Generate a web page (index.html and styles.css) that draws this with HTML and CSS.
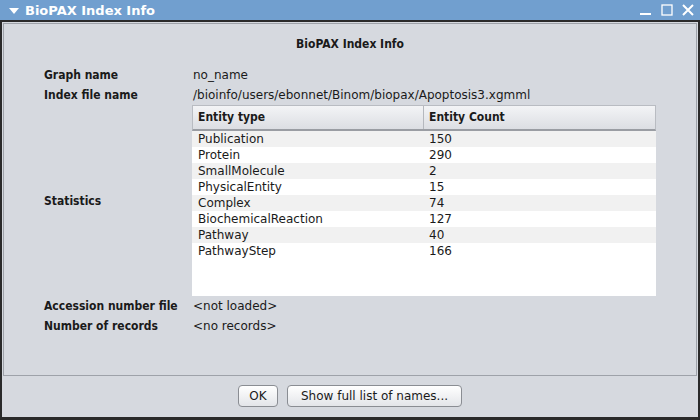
FILE: index.html
```html
<!DOCTYPE html>
<html>
<head>
<meta charset="utf-8">
<link rel="stylesheet" href="styles.css">
</head>
<body>
<div class="window">
  <div class="titlebar">
    <svg class="menu-arrow" width="10" height="6" viewBox="0 0 10 6"><polygon points="0,0 10,0 5,6" fill="#fff"/></svg>
    <span class="title">BioPAX Index Info</span>
    <div class="controls">
      <svg width="12" height="12" viewBox="0 0 12 12"><rect x="0" y="9" width="11" height="2" fill="#fff"/></svg>
      <svg width="12" height="12" viewBox="0 0 12 12"><rect x="1" y="1" width="10" height="10" fill="none" stroke="#fff" stroke-width="1.3"/></svg>
      <svg width="12" height="12" viewBox="0 0 12 12"><path d="M1 1 L11 11 M11 1 L1 11" stroke="#fff" stroke-width="2"/></svg>
    </div>
  </div>
  <div class="body">
    <div class="panel">
      <div class="heading">BioPAX Index Info</div>
      <div class="grid">
        <div class="label">Graph name</div>
        <div class="value">no_name</div>
        <div class="label">Index file name</div>
        <div class="value">/bioinfo/users/ebonnet/Binom/biopax/Apoptosis3.xgmml</div>
        <div class="label stat-label">Statistics</div>
        <div class="table">
          <div class="thead">
            <div class="th c1">Entity type</div>
            <div class="th c2">Entity Count</div>
          </div>
          <div class="tbody">
            <div class="tr odd"><div class="td c1">Publication</div><div class="td c2">150</div></div>
            <div class="tr"><div class="td c1">Protein</div><div class="td c2">290</div></div>
            <div class="tr odd"><div class="td c1">SmallMolecule</div><div class="td c2">2</div></div>
            <div class="tr"><div class="td c1">PhysicalEntity</div><div class="td c2">15</div></div>
            <div class="tr odd"><div class="td c1">Complex</div><div class="td c2">74</div></div>
            <div class="tr"><div class="td c1">BiochemicalReaction</div><div class="td c2">127</div></div>
            <div class="tr odd"><div class="td c1">Pathway</div><div class="td c2">40</div></div>
            <div class="tr"><div class="td c1">PathwayStep</div><div class="td c2">166</div></div>
          </div>
        </div>
        <div class="label">Accession number file</div>
        <div class="value">&lt;not loaded&gt;</div>
        <div class="label">Number of records</div>
        <div class="value">&lt;no records&gt;</div>
      </div>
    </div>
    <div class="buttons">
      <button class="btn ok">OK</button>
      <button class="btn full">Show full list of names...</button>
    </div>
  </div>
</div>
</body>
</html>
```

FILE: styles.css
```css
* { box-sizing: border-box; }
html, body { margin: 0; padding: 0; }
body {
  width: 700px;
  height: 420px;
  overflow: hidden;
  font-family: "DejaVu Sans", sans-serif;
  font-size: 12px;
  color: #1a1a1a;
}
.window {
  width: 700px;
  height: 420px;
  display: flex;
  flex-direction: column;
  background: #d6d9df;
  border-left: 2px solid #2a2a2a;
  border-right: 2px solid #2a2a2a;
  border-bottom: 2px solid #2a2a2a;
}
.titlebar {
  height: 22px;
  margin: 0 -2px;
  background: #719fcf;
  border-bottom: 2px solid #2a2a2a;
  display: flex;
  align-items: center;
  padding-left: 9px;
  color: #fff;
}
.menu-arrow { margin-top: 1px; }
.title {
  font-weight: bold;
  font-size: 13px;
  margin-left: 6px;
}
.controls {
  margin-left: auto;
  display: flex;
  gap: 9px;
  padding-right: 6px;
}
.body {
  flex: 1;
  display: flex;
  flex-direction: column;
  border-bottom: 1px solid #2a2a2a;
}
.panel {
  margin: 1px 1px 0 1px;
  height: 353px;
  border: 1px solid #9ea2a9;
  padding: 12px 0 0 40px;
}
.heading {
  text-align: center;
  font-family: "DejaVu Sans Condensed", "DejaVu Sans", sans-serif;
  font-weight: bold;
  line-height: 16px;
  margin-left: -40px;
  font-size: 12px;
}
.grid {
  margin-top: 13px;
  display: grid;
  grid-template-columns: 148px 464px;
  grid-template-rows: 20px 20px 191px 20px 20px;
}
.label {
  font-family: "DejaVu Sans Condensed", "DejaVu Sans", sans-serif;
  font-weight: bold;
  line-height: 20px;
  white-space: nowrap;
}
.value {
  line-height: 20px;
  padding-left: 1px;
  white-space: nowrap;
}
.stat-label {
  align-self: center;
}
.table {
  height: 191px;
  background: #fff;
  display: flex;
  flex-direction: column;
}
.thead {
  height: 26px;
  display: flex;
  background: linear-gradient(#f3f4f6, #dcdee3);
  border: 1px solid #b9bcc2;
  border-bottom: 2px solid #9a9da3;
}
.th {
  font-family: "DejaVu Sans Condensed", "DejaVu Sans", sans-serif;
  font-weight: bold;
  line-height: 23px;
  padding-left: 5px;
}
.th.c1 { border-right: 1px solid #b5b8be; }
.c1 { width: 231px; }
.c2 { flex: 1; }
.tbody { display: flex; flex-direction: column; }
.tr {
  height: 16px;
  display: flex;
  line-height: 16px;
}
.tr.odd { background: #f1f1f1; }
.td { padding-left: 6px; }
.buttons {
  flex: 1;
  display: flex;
  justify-content: center;
  align-items: flex-start;
  gap: 9px;
  padding-top: 9px;
}
.btn {
  height: 22px;
  font-family: "DejaVu Sans", sans-serif;
  font-size: 12px;
  color: #1a1a1a;
  background: linear-gradient(#ffffff, #e3e5e9);
  border: 1px solid #8a8d93;
  border-radius: 4px;
  padding: 0;
}
.btn.ok { width: 40px; }
.btn.full { width: 175px; }
```
